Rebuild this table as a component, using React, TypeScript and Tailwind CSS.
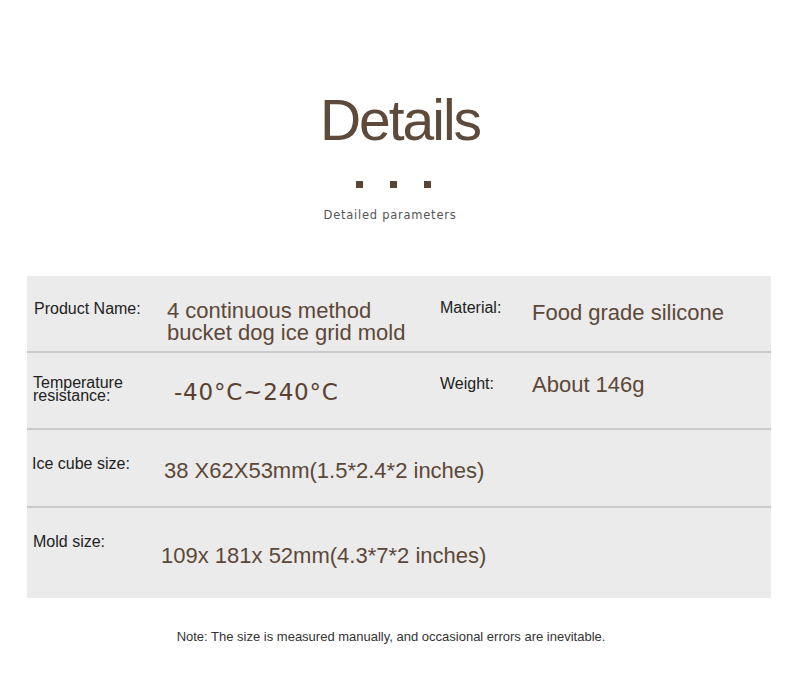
import React from "react";

const label = "text-[16px] leading-[16px] text-[#222]";
const value = "text-[22px] leading-[22px] text-[#5c4838]";

export default function App() {
    return (
        <div className="w-[800px] h-[693px] bg-white font-['Liberation_Sans',Arial,sans-serif] overflow-hidden">
            <div className="flex flex-col items-center pt-[91px]">
                <h1 className="text-[57px] leading-[58px] tracking-[-2px] text-[#5e4a3a]">Details</h1>
                <div className="flex gap-[27px] mt-[32px] ml-[-14px]">
                    <span className="w-[7px] h-[7px] bg-[#5a4535]"></span>
                    <span className="w-[7px] h-[7px] bg-[#5a4535]"></span>
                    <span className="w-[7px] h-[7px] bg-[#5a4535]"></span>
                </div>
                <p className="mt-[21px] ml-[-20px] text-[11.5px] leading-[12px] tracking-[0.75px] text-[#555] font-['DejaVu_Sans',sans-serif]">Detailed parameters</p>
            </div>

            <div className="mt-[55px] ml-[27px] w-[744px] bg-[#ebebeb]">
                <div className="flex h-[77px] border-b-2 border-[#c9c9c9]">
                    <div className={`${label} w-[140px] pl-[7px] pt-[25px]`}>Product Name:</div>
                    <div className={`${value} w-[273px] pt-[24px]`}>4 continuous method<br/>bucket dog ice grid mold</div>
                    <div className={`${label} w-[92px] pt-[24px]`}>Material:</div>
                    <div className={`${value} pt-[26px]`}>Food grade silicone</div>
                </div>
                <div className="flex h-[77px] border-b-2 border-[#c9c9c9]">
                    <div className="w-[147px] pl-[6px] pt-[23px] text-[16px] leading-[13px] text-[#222]">Temperature<br/>resistance:</div>
                    <div className="w-[266px] pt-[27px] text-[23px] leading-[24px] tracking-[0.8px] text-[#5a4030] font-['DejaVu_Sans',sans-serif]">-40°C~240°C</div>
                    <div className={`${label} w-[92px] pt-[23px]`}>Weight:</div>
                    <div className={`${value} pt-[21px]`}>About 146g</div>
                </div>
                <div className="flex h-[78px] border-b-2 border-[#c9c9c9]">
                    <div className={`${label} w-[137px] pl-[5px] pt-[26px]`}>Ice cube size:</div>
                    <div className={`${value} pt-[30px]`}>38 X62X53mm(1.5*2.4*2 inches)</div>
                </div>
                <div className="flex h-[90px]">
                    <div className={`${label} w-[134px] pl-[6px] pt-[26px]`}>Mold size:</div>
                    <div className={`${value} pt-[37px]`}>109x 181x 52mm(4.3*7*2 inches)</div>
                </div>
            </div>

            <p className="mt-[32px] text-center pr-[18px] text-[13px] leading-[14px] text-[#333]">Note: The size is measured manually, and occasional errors are inevitable.</p>
        </div>
    );
}
